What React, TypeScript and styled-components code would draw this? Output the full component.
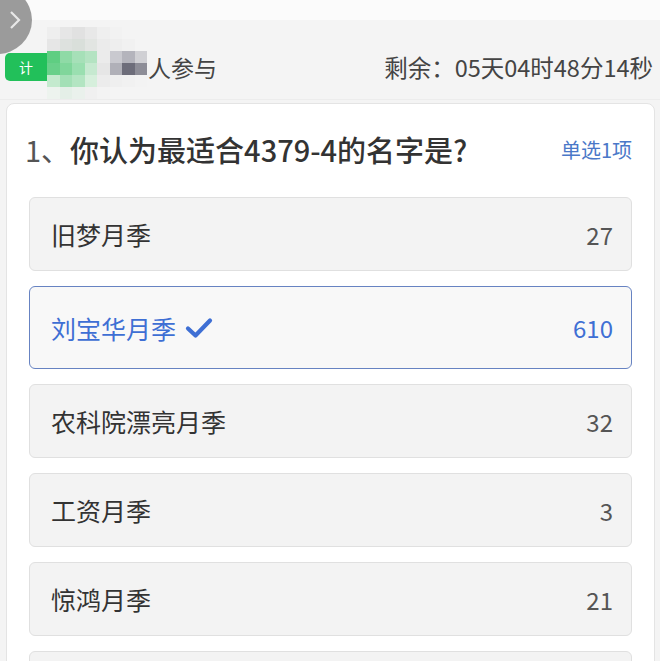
import React from 'react'
import styled, { createGlobalStyle } from 'styled-components'

const GlobalStyle = createGlobalStyle`
  html, body {
    margin: 0;
    padding: 0;
    background: #f4f4f4;
    font-family: "Noto Sans CJK SC", "Noto Sans", sans-serif;
    color: #333;
  }
`

const options = [
  { name: '旧梦月季', count: 27 },
  { name: '刘宝华月季', count: 610, selected: true },
  { name: '农科院漂亮月季', count: 32 },
  { name: '工资月季', count: 3 },
  { name: '惊鸿月季', count: 21 },
  { name: '', count: 0 },
]

// blurred mosaic cells over the participant count
const mosaic = [
  ['#eeeeee', '#e6e6e6', '#e1e1e1', '#e8e8e8', '#efefef', '#f2f2f2', '#f4f4f4', '#f4f4f4'],
  ['#e6e6e6', '#dde1de', '#d9dfda', '#e2e5e2', '#ebebeb', '#eeeeee', '#f1f1f1', '#f4f4f4'],
  ['#5fce82', '#8fdaa6', '#a6e0b8', '#b4e3c2', '#ebebeb', '#c9c9cf', '#b4b4bc', '#d0d0d4'],
  ['#69d08a', '#80d69b', '#9adfb0', '#c6e9d0', '#e6e6e6', '#b0b0b8', '#6d6d7a', '#8d8d97'],
  ['#c4eace', '#a3e0b6', '#b3e5c2', '#d6efdc', '#ececec', '#efefef', '#f1f1f1', '#f3f3f3'],
  ['#edf3ee', '#e4efe7', '#eaf1ec', '#f0f0f0', '#f3f3f3', '#f4f4f4', '#f4f4f4', '#f4f4f4'],
]

const Page = styled.div`
  width: 660px;
  height: 661px;
  overflow: hidden;
  position: relative;
  background: #f4f4f4;
`

const TopStrip = styled.div`
  height: 20px;
  background: #fbfbfb;
`

const BackCircle = styled.div`
  position: absolute;
  left: -38px;
  top: -14px;
  width: 70px;
  height: 68px;
  border-radius: 50%;
  background: #9b9b9b;
  display: flex;
  align-items: center;
  justify-content: flex-end;
  padding-right: 10px;
  box-sizing: border-box;
`

const Header = styled.div`
  height: 80px;
  display: flex;
  align-items: center;
  justify-content: space-between;
  padding: 14px 5px 0 5px;
  box-sizing: border-box;
  border-bottom: 1px solid #ececec;
`

const LeftGroup = styled.div`
  display: flex;
  align-items: center;
  height: 100%;
`

const Tag = styled.div`
  width: 42px;
  height: 28px;
  background: #22c05a;
  border-radius: 5px 0 0 5px;
  color: #fff;
  font-size: 14px;
  display: flex;
  align-items: center;
  padding-left: 14px;
  box-sizing: border-box;
`

const Mosaic = styled.div`
  display: grid;
  grid-template-columns: repeat(8, 12.5px);
  grid-auto-rows: 12px;
  margin-top: -8px;
`

const Cell = styled.div<{ $c: string }>`
  background: ${p => p.$c};
`

const Joined = styled.span`
  font-size: 23px;
  color: #444;
  margin-left: 1px;
`

const Remain = styled.span`
  font-size: 23.5px;
  color: #444;
  margin-right: 2px;
`

const Card = styled.div`
  margin: 3px 5px 0 6px;
  background: #fff;
  border: 1px solid #e4e4e4;
  border-radius: 8px;
  padding: 0 22px 0 18px;
  height: 700px;
`

const QuestionRow = styled.div`
  display: flex;
  align-items: center;
  justify-content: space-between;
  height: 38px;
  margin: 26px 0 29px 0;
`

const Question = styled.span`
  font-size: 29px;
  color: #333;
  font-weight: 500;
`

const Index = styled.span`
  color: #555;
  font-weight: 400;
`

const Mode = styled.span`
  font-size: 20px;
  color: #4a78c8;
`

const OptionList = styled.div`
  display: flex;
  flex-direction: column;
  gap: 15px;
  padding-left: 4px;
`

const Option = styled.div<{ $selected?: boolean }>`
  height: ${p => (p.$selected ? 83 : 74)}px;
  box-sizing: border-box;
  display: flex;
  align-items: center;
  justify-content: space-between;
  padding: 0 18px 0 21px;
  border-radius: 6px;
  background: ${p => (p.$selected ? '#f8f8f8' : '#f3f3f3')};
  border: ${p => (p.$selected ? '1.5px solid #6783c2' : '1px solid #e0e0e0')};
`

const Name = styled.span<{ $selected?: boolean }>`
  font-size: 25px;
  color: ${p => (p.$selected ? '#3e6fd4' : '#333')};
  display: flex;
  align-items: center;
  gap: 9px;
`

const Count = styled.span<{ $selected?: boolean }>`
  font-size: 24px;
  color: ${p => (p.$selected ? '#3e6fd4' : '#555')};
`

const Check = () => (
  <svg width='28' height='22' viewBox='0 0 28 22'>
    <path d='M3 11.5 L10.5 18.5 L25 3.5' fill='none' stroke='#3e6fd4' strokeWidth='4.2' strokeLinecap='round' strokeLinejoin='round' />
  </svg>
)

const App = () => {
  return (
    <Page>
      <GlobalStyle />
      <BackCircle>
        <svg width='14' height='22' viewBox='0 0 14 22'>
          <path d='M3 3 L11 11 L3 19' fill='none' stroke='#e8e8e8' strokeWidth='2.2' />
        </svg>
      </BackCircle>
      <TopStrip />
      <Header>
        <LeftGroup>
          <Tag>计</Tag>
          <Mosaic>
            {mosaic.flat().map((c, i) => (
              <Cell key={i} $c={c} />
            ))}
          </Mosaic>
          <Joined>人参与</Joined>
        </LeftGroup>
        <Remain>剩余：05天04时48分14秒</Remain>
      </Header>
      <Card>
        <QuestionRow>
          <Question>
            <Index>1、</Index>你认为最适合4379-4的名字是?
          </Question>
          <Mode>单选1项</Mode>
        </QuestionRow>
        <OptionList>
          {options.map((o, i) => (
            <Option key={i} $selected={o.selected}>
              <Name $selected={o.selected}>
                {o.name}
                {o.selected && <Check />}
              </Name>
              <Count $selected={o.selected}>{o.name ? o.count : ''}</Count>
            </Option>
          ))}
        </OptionList>
      </Card>
    </Page>
  )
}

export default App
